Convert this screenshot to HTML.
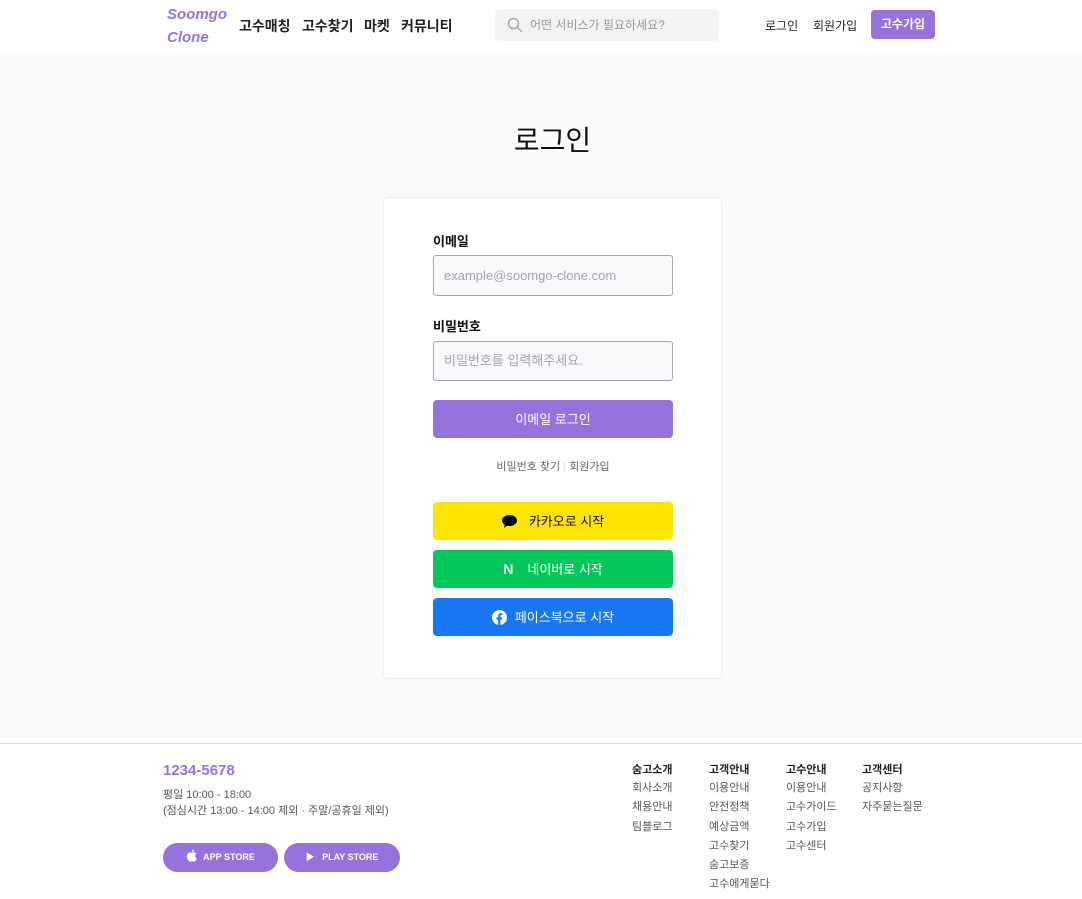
<!DOCTYPE html>
<html><head><meta charset="utf-8"><style>
*{box-sizing:border-box;margin:0;padding:0}
body{width:1082px;height:899px;overflow:hidden;font-family:"Liberation Sans","Noto Sans CJK KR",sans-serif;background:#fafafa;color:#222;position:relative}
.a{position:absolute}
header{position:absolute;left:0;top:0;width:1082px;height:54px;background:#fff}
.logo{left:167px;top:3px;color:#9672dc;font-weight:bold;font-style:italic;font-size:15px;line-height:23px}
.nav{top:16px;font-size:14px;font-weight:bold;color:#222}
.search{left:495px;top:9px;width:224px;height:32px;background:#f3f3f3;border-radius:5px}
.search span{position:absolute;left:35px;top:7px;font-size:12px;color:#999}
.btnp{left:871px;top:10px;width:64px;height:29px;background:#9672dc;border-radius:4px;color:#fff;font-size:12px;font-weight:bold;text-align:center;line-height:29px}
.card{left:383px;top:197px;width:339px;height:482px;background:#fff;border:1px solid #eee;border-radius:5px}
.lbl{font-size:13px;font-weight:bold;color:#111}
.inp{left:433px;width:240px;background:#f8f9fb;border:1px solid #a5a8b3;border-radius:3px;font-size:13px;color:#a3a3ab;padding-left:10px}
.sb{left:433px;width:240px;height:38px;border-radius:4px;font-size:13px;text-align:center;line-height:39px}
footer{position:absolute;left:0;top:743px;width:1082px;height:156px;background:#fff;border-top:1px solid #ddd}
.fh{font-size:11px;font-weight:bold;color:#222;top:17px}
.fl{font-size:11px;color:#555;line-height:19.3px;top:35px}
.store{top:843px;height:29px;background:#9672dc;border-radius:15px;color:#fff;font-size:9px;font-weight:bold;line-height:29px;text-align:center}
</style></head><body>
<header>
<div class="a logo">Soomgo<br>Clone</div>
<div class="a nav" style="left:239px">고수매칭</div>
<div class="a nav" style="left:302px">고수찾기</div>
<div class="a nav" style="left:364px">마켓</div>
<div class="a nav" style="left:401px">커뮤니티</div>
<div class="a search"><svg class="a" style="left:12px;top:8px" width="16" height="16" viewBox="0 0 16 16"><circle cx="6.5" cy="6.5" r="5" fill="none" stroke="#aaa" stroke-width="1.5"/><path d="M10 10l5 5" stroke="#aaa" stroke-width="1.5"/></svg><span>어떤 서비스가 필요하세요?</span></div>
<div class="a" style="left:765px;top:17px;font-size:12px">로그인</div>
<div class="a" style="left:813px;top:17px;font-size:12px">회원가입</div>
<div class="a btnp">고수가입</div>
</header>
<div class="a" style="left:383px;width:339px;top:119px;text-align:center;font-size:28px;color:#111">로그인</div>
<div class="a card"></div>
<div class="a lbl" style="left:433px;top:231px">이메일</div>
<div class="a inp" style="top:255px;height:41px;line-height:39px">example@soomgo-clone.com</div>
<div class="a lbl" style="left:433px;top:316px">비밀번호</div>
<div class="a inp" style="top:341px;height:40px;line-height:38px">비밀번호를 입력해주세요.</div>
<div class="a sb" style="top:400px;background:#9672dc;color:#fff">이메일 로그인</div>
<div class="a" style="left:433px;width:240px;top:458px;text-align:center;font-size:11px;color:#666">비밀번호 찾기 <span style="color:#ddd">|</span> 회원가입</div>
<div class="a sb" style="top:502px;background:#fee500;color:#111"><svg width="15" height="13" viewBox="0 0 15 13" style="vertical-align:-2px;margin-right:12px"><ellipse cx="7.5" cy="5.5" rx="7.5" ry="5.5"/><path d="M3 9l-1 4 4-3z"/></svg>카카오로 시작</div>
<div class="a sb" style="top:550px;background:#03c75a;color:#fff"><b style="font-size:14px;margin-right:14px">N</b>네이버로 시작</div>
<div class="a sb" style="top:598px;background:#1877f2;color:#fff"><svg width="15" height="15" viewBox="0 0 15 15" style="vertical-align:-3px;margin-right:8px"><circle cx="7.5" cy="7.5" r="7.5" fill="#fff"/><path d="M8.3 15V9.5h1.8l.3-2.1H8.3V6.1c0-.6.2-1 1-1h1.1V3.2c-.2 0-.9-.1-1.6-.1-1.6 0-2.6 1-2.6 2.7v1.6H4.4v2.1h1.8V15z" fill="#1877f2"/></svg>페이스북으로 시작</div>
<footer>
<div class="a" style="left:163px;top:18px;font-size:15px;font-weight:bold;color:#9672dc">1234-5678</div>
<div class="a" style="left:163px;top:43px;font-size:11px;color:#555;line-height:16px">평일 10:00 - 18:00<br>(점심시간 13:00 - 14:00 제외 · 주말/공휴일 제외)</div>
<div class="a fh" style="left:632px">숨고소개</div>
<div class="a fl" style="left:632px">회사소개<br>채용안내<br>팀블로그</div>
<div class="a fh" style="left:709px">고객안내</div>
<div class="a fl" style="left:709px">이용안내<br>안전정책<br>예상금액<br>고수찾기<br>숨고보증<br>고수에게묻다</div>
<div class="a fh" style="left:786px">고수안내</div>
<div class="a fl" style="left:786px">이용안내<br>고수가이드<br>고수가입<br>고수센터</div>
<div class="a fh" style="left:862px">고객센터</div>
<div class="a fl" style="left:862px">공지사항<br>자주묻는질문</div>
</footer>
<div class="a store" style="left:163px;width:115px"><svg width="11" height="13" viewBox="0 0 11 13" style="vertical-align:-2px;margin-right:6px"><path d="M9.1 6.9c0-1.5 1.2-2.2 1.3-2.3-.7-1-1.8-1.2-2.2-1.2-.9-.1-1.8.6-2.3.6s-1.2-.5-2-.5C2.9 3.5 1.9 4.1 1.4 5.1c-1.1 1.9-.3 4.6.8 6.1.5.7 1.1 1.6 1.9 1.5.8 0 1-.5 2-.5s1.2.5 2 .5 1.3-.8 1.8-1.5c.6-.8.8-1.6.8-1.7 0 0-1.6-.6-1.6-2.6zM7.6 2.4C8 1.9 8.3 1.2 8.2.5c-.6 0-1.4.4-1.8.9-.4.4-.7 1.1-.6 1.8.7.1 1.4-.3 1.8-.8z" fill="#fff"/></svg>APP STORE</div>
<div class="a store" style="left:284px;width:116px">▶&nbsp;&nbsp; PLAY STORE</div>
</body></html>
